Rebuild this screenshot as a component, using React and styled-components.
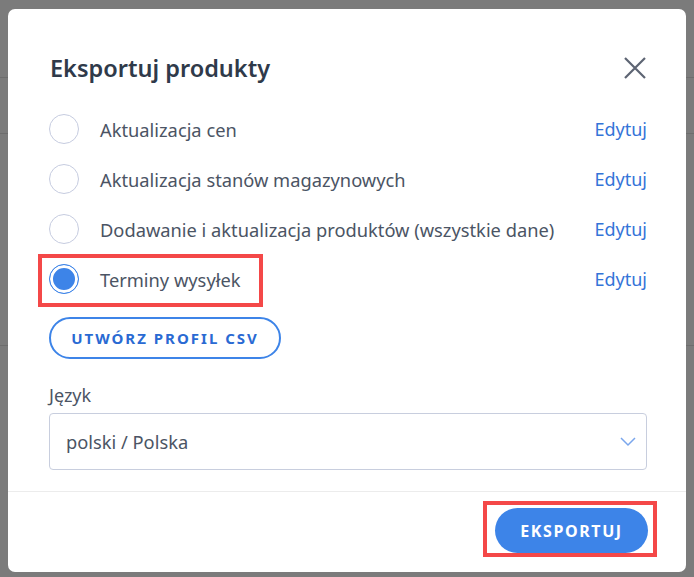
import React from 'react'
import styled, { createGlobalStyle } from 'styled-components'

const GlobalStyle = createGlobalStyle`
  html, body {
    margin: 0;
    padding: 0;
    background: #7b7b7b;
    font-family: "Noto Sans", "Liberation Sans", sans-serif;
  }
`

const Page = styled.div`
  position: relative;
  width: 694px;
  height: 577px;
  overflow: hidden;
  background: #7b7b7b;
`

const BackLine = styled.div`
  position: absolute;
  left: 0;
  right: 0;
  top: ${p => p.top}px;
  height: 1px;
  background: #6d6d6d;
`

const Modal = styled.div`
  position: absolute;
  left: 8px;
  top: 9px;
  width: 678px;
  height: 563px;
  background: #fff;
  border-radius: 7px;
  display: flex;
  flex-direction: column;
  box-sizing: border-box;
`

const Header = styled.div`
  display: flex;
  align-items: center;
  justify-content: space-between;
  padding: 44px 40px 0 42px;
  height: 30px;
  box-sizing: content-box;
`

const Title = styled.h2`
  margin: 0;
  font-size: 23.5px;
  line-height: 30px;
  font-weight: 600;
  color: #2f3a4a;
`

const CloseButton = styled.button`
  border: none;
  background: transparent;
  padding: 0;
  width: 22px;
  height: 22px;
  display: flex;
  cursor: pointer;
`

const Body = styled.div`
  padding: 21px 39px 0 41px;
  display: flex;
  flex-direction: column;
`

const OptionRow = styled.div`
  display: flex;
  align-items: center;
  justify-content: space-between;
  height: 50px;
`

const Option = styled.label`
  position: relative;
  display: flex;
  align-items: center;
  gap: 21px;
  cursor: pointer;

  ${p => p.highlighted && `
    &::after {
      content: '';
      position: absolute;
      left: -11px;
      top: -10px;
      width: 225px;
      height: 53px;
      box-sizing: border-box;
      border: 4px solid #f44848;
      pointer-events: none;
    }
  `}
`

const Radio = styled.span`
  width: 30px;
  height: 30px;
  box-sizing: border-box;
  border-radius: 50%;
  border: 1.5px solid ${p => (p.checked ? '#3d84e8' : '#c6cce0')};
  background: ${p => (p.checked ? '#3d84e8' : '#fff')};
  box-shadow: ${p => (p.checked ? 'inset 0 0 0 3px #fff' : 'none')};
  flex-shrink: 0;
`

const OptionLabel = styled.span`
  font-size: 18.3px;
  color: #4b5464;
`

const EditLink = styled.a`
  font-size: 18px;
  color: #3474d8;
  text-decoration: none;
  cursor: pointer;
`

const OutlineButton = styled.button`
  align-self: flex-start;
  margin-top: 13px;
  height: 42px;
  width: 232px;
  border: 2px solid #3d84e8;
  border-radius: 21px;
  background: #fff;
  color: #2a6ad3;
  font-family: inherit;
  font-size: 15px;
  font-weight: 700;
  letter-spacing: 2px;
  cursor: pointer;
`

const FieldLabel = styled.div`
  margin-top: 24px;
  font-size: 18px;
  line-height: 24px;
  color: #4b5464;
`

const Select = styled.div`
  margin-top: 6px;
  height: 57px;
  box-sizing: border-box;
  border: 1px solid #c8cede;
  border-radius: 4px;
  display: flex;
  align-items: center;
  justify-content: space-between;
  padding: 0 10px 0 16px;
  font-size: 18.3px;
  color: #4b5464;
`

const Footer = styled.div`
  margin-top: 21px;
  border-top: 1px solid #ececec;
  padding: 16px 38px 19px;
  display: flex;
  justify-content: flex-end;
`

const PrimaryWrap = styled.div`
  position: relative;

  &::after {
    content: '';
    position: absolute;
    left: -12px;
    right: -9px;
    top: -7px;
    bottom: -4px;
    border: 4px solid #f44848;
    pointer-events: none;
  }
`

const PrimaryButton = styled.button`
  height: 45px;
  width: 153px;
  border: none;
  border-radius: 23px;
  background: #3d84e8;
  color: #fff;
  font-family: inherit;
  font-size: 16px;
  font-weight: 700;
  letter-spacing: 1.6px;
  cursor: pointer;
`

const options = [
  { label: 'Aktualizacja cen' },
  { label: 'Aktualizacja stanów magazynowych' },
  { label: 'Dodawanie i aktualizacja produktów (wszystkie dane)' },
  { label: 'Terminy wysyłek', checked: true },
]

export default function App() {
  return (
    <Page>
      <GlobalStyle />
      <BackLine top={77} />
      <BackLine top={133} />
      <BackLine top={345} />
      <Modal>
        <Header>
          <Title>Eksportuj produkty</Title>
          <CloseButton>
            <svg width="22" height="22" viewBox="0 0 22 22">
              <path d="M1 1 L21 21 M21 1 L1 21" stroke="#5d6473" strokeWidth="2.2" fill="none" />
            </svg>
          </CloseButton>
        </Header>
        <Body>
          {options.map(o => (
            <OptionRow key={o.label}>
              <Option highlighted={o.checked}>
                <Radio checked={o.checked} />
                <OptionLabel>{o.label}</OptionLabel>
              </Option>
              <EditLink>Edytuj</EditLink>
            </OptionRow>
          ))}
          <OutlineButton>UTWÓRZ PROFIL CSV</OutlineButton>
          <FieldLabel>Język</FieldLabel>
          <Select>
            <span>polski / Polska</span>
            <svg width="16" height="10" viewBox="0 0 16 10">
              <path d="M1 1 L8 8 L15 1" stroke="#7aa6ec" strokeWidth="1.5" fill="none" />
            </svg>
          </Select>
        </Body>
        <Footer>
          <PrimaryWrap>
            <PrimaryButton>EKSPORTUJ</PrimaryButton>
          </PrimaryWrap>
        </Footer>
      </Modal>
    </Page>
  )
}
